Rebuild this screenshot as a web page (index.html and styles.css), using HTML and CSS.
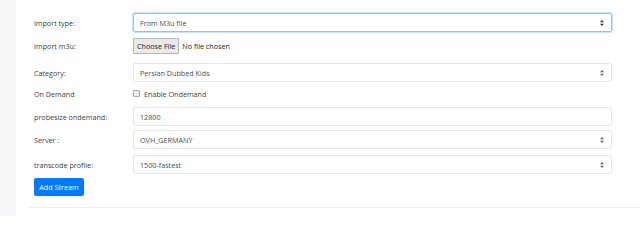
FILE: index.html
```html
<!DOCTYPE html>
<html lang="en">
    <head>
        <meta charset="UTF-8" />
        <title>Add Stream</title>
        <link rel="stylesheet" href="styles.css">
    </head>
    <body>
        <div id="app">
            <div class="sidebar"></div>
            <div class="main">
                <form class="stream-form">
                    <div class="row">
                        <span class="label">import type:</span>
                        <div class="select focused">
                            <span>From M3u file</span>
                            <svg class="arrows" width="4" height="6" viewBox="0 0 4 6"><path d="M2 0L4 2.3H0z M2 6L4 3.7H0z" fill="#333"/></svg>
                        </div>
                    </div>
                    <div class="row row-file">
                        <span class="label">Import m3u:</span>
                        <div class="file">
                            <span class="file-btn">Choose File</span>
                            <span class="file-name">No file chosen</span>
                        </div>
                    </div>
                    <div class="row row-cat">
                        <span class="label">Category:</span>
                        <div class="select">
                            <span>Persian Dubbed Kids</span>
                            <svg class="arrows" width="4" height="6" viewBox="0 0 4 6"><path d="M2 0L4 2.3H0z M2 6L4 3.7H0z" fill="#666"/></svg>
                        </div>
                    </div>
                    <div class="row row-check">
                        <span class="label">On Demand</span>
                        <label class="check"><span class="box"></span>Enable Ondemand</label>
                    </div>
                    <div class="row">
                        <span class="label">probesize ondemand:</span>
                        <div class="select"><span>12800</span></div>
                    </div>
                    <div class="row row-server">
                        <span class="label">Server :</span>
                        <div class="select">
                            <span>OVH_GERMANY</span>
                            <svg class="arrows" width="4" height="6" viewBox="0 0 4 6"><path d="M2 0L4 2.3H0z M2 6L4 3.7H0z" fill="#666"/></svg>
                        </div>
                    </div>
                    <div class="row">
                        <span class="label">transcode profile:</span>
                        <div class="select">
                            <span>1500-fastest</span>
                            <svg class="arrows" width="4" height="6" viewBox="0 0 4 6"><path d="M2 0L4 2.3H0z M2 6L4 3.7H0z" fill="#666"/></svg>
                        </div>
                    </div>
                    <button type="button" class="btn">Add Stream</button>
                </form>
                <div class="rule"></div>
            </div>
        </div>
    </body>
</html>
```

FILE: styles.css
```css
html {
    background-color: #fff;
}

body {
    margin: 0;
    font-family: "Open Sans", "Noto Sans", sans-serif;
    font-size: 7.2px;
    color: #3a3f44;
}
#app {
    display: flex;
    height: 242px;
}
.sidebar {
    width: 16px;
    height: 216px;
    background-color: #f5f6f8;
}
.main {
    flex-grow: 1;
    padding-top: 13px;
}
.stream-form {
    padding-left: 18px;
}
.row {
    display: flex;
    align-items: center;
    height: 19px;
    margin-bottom: 4px;
}
.row-file {
    margin-bottom: 8px;
}
.row-cat {
    margin-bottom: 2px;
}
.row-server {
    margin-bottom: 6px;
}
.label {
    width: 99px;
}
.select {
    position: relative;
    display: flex;
    align-items: center;
    box-sizing: border-box;
    width: 479px;
    height: 19px;
    padding-left: 6px;
    border: 1px solid #e4e6e9;
    border-radius: 2px;
    color: #495057;
}
.select.focused {
    border-color: #8cc3ff;
    box-shadow: 0 0 0 1px rgba(0, 123, 255, 0.2);
}
.arrows {
    position: absolute;
    right: 7px;
    top: 6px;
}
.file {
    display: flex;
    align-items: center;
    gap: 3px;
}
.file-btn {
    padding: 2px 3px;
    background-color: #e9e9e9;
    border: 1px solid #b5b5b5;
    border-radius: 1px;
    color: #222;
}
.file-name {
    color: #222;
}
.check {
    display: flex;
    align-items: center;
    gap: 4px;
    color: #3a3f44;
}
.box {
    width: 5px;
    height: 5px;
    border: 1px solid #aaa;
    border-radius: 1px;
    background-color: #f2f2f2;
}
.btn {
    display: block;
    margin-top: 3px;
    width: 50px;
    height: 18px;
    padding: 0;
    border: none;
    border-radius: 2px;
    background-color: #007bff;
    color: white;
    font-family: inherit;
    font-size: 7.2px;
}
.rule {
    margin-top: 11px;
    margin-left: 11px;
    border-top: 1px solid #eceef0;
}
```
